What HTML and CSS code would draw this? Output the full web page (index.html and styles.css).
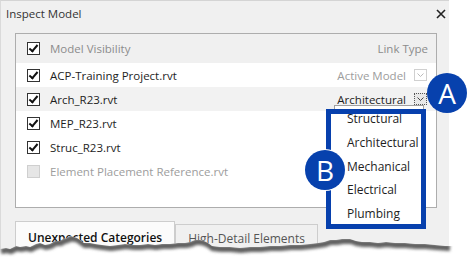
FILE: index.html
```html
<!DOCTYPE html>
<html lang="en">
<head>
<meta charset="UTF-8">
<meta name="viewport" content="width=device-width, initial-scale=1.0">
<title>Inspect Model</title>
<link rel="stylesheet" href="styles.css">
</head>
<body>
<div class="dialog">
    <div class="titlebar">
        <span class="title">Inspect Model</span>
        <svg class="close" width="10" height="10" viewBox="0 0 10 10"><path d="M1 1 L9 9 M9 1 L1 9" stroke="#222" stroke-width="1.6"/></svg>
    </div>
    <div class="panel">
        <div class="row head">
            <span class="cb on"></span>
            <span class="name">Model Visibility</span>
            <span class="type">Link Type</span>
        </div>
        <div class="row">
            <span class="cb on"></span>
            <span class="name">ACP-Training Project.rvt</span>
            <span class="type muted">Active Model</span>
            <span class="drop off"><svg width="7" height="4" viewBox="0 0 7 4"><path d="M0.5 0.5 L3.5 3.5 L6.5 0.5" fill="none" stroke="#bbb"/></svg></span>
        </div>
        <div class="row alt">
            <span class="cb on"></span>
            <span class="name">Arch_R23.rvt</span>
            <span class="type">Architectural</span>
            <span class="drop focus"><svg width="7" height="4" viewBox="0 0 7 4"><path d="M0.5 0.5 L3.5 3.5 L6.5 0.5" fill="none" stroke="#444"/></svg></span>
        </div>
        <div class="row">
            <span class="cb on"></span>
            <span class="name">MEP_R23.rvt</span>
        </div>
        <div class="row">
            <span class="cb on"></span>
            <span class="name">Struc_R23.rvt</span>
        </div>
        <div class="row">
            <span class="cb disabled"></span>
            <span class="name muted">Element Placement Reference.rvt</span>
        </div>
    </div>
    <div class="tabs">
        <div class="tab active">Unexpected Categories</div>
        <div class="tab">High-Detail Elements</div>
    </div>
</div>

<div class="menu"></div>
<div class="callout">
    <div class="items">
        <div class="item">Structural</div>
        <div class="item">Architectural</div>
        <div class="item">Mechanical</div>
        <div class="item">Electrical</div>
        <div class="item">Plumbing</div>
    </div>
</div>
<div class="badge badge-a">A</div>
<div class="badge badge-b">B</div>

<svg class="tear" width="468" height="34" viewBox="0 236 468 34">
    <defs>
        <clipPath id="below">
            <path id="edge" d="M0 249 L6 248 L10 249 L16 246 L20 247 L26 246 L30 247 L36 244 L40 243 L45 245 L50 244 L55 241 L60 241 L63 239 L67 238 L70 236 L74 237 L77 238 L80 240 L84 243 L90 243 L95 244 L102 245 L110 246 L118 245 L125 244 L133 245 L140 245 L148 244 L155 245 L162 244 L170 244 L178 243 L185 243 L190 242 L195 240 L200 240 L204 241 L208 243 L212 246 L220 247 L230 247 L240 248 L250 247 L260 247 L270 246 L280 246 L290 245 L300 245 L310 244 L318 243 L324 242 L330 240 L336 240 L342 239 L350 239 L356 241 L362 242 L370 242 L378 243 L386 242 L395 243 L405 243 L415 244 L425 244 L435 245 L445 246 L468 246 L468 270 L0 270 Z"/>
        </clipPath>
        <filter id="blur" x="-5%" y="-50%" width="110%" height="200%">
            <feGaussianBlur stdDeviation="1.8"/>
        </filter>
    </defs>
    <use href="#edge" fill="#fff"/>
    <g clip-path="url(#below)">
        <path d="M0 249 L6 248 L10 249 L16 246 L20 247 L26 246 L30 247 L36 244 L40 243 L45 245 L50 244 L55 241 L60 241 L63 239 L67 238 L70 236 L74 237 L77 238 L80 240 L84 243 L90 243 L95 244 L102 245 L110 246 L118 245 L125 244 L133 245 L140 245 L148 244 L155 245 L162 244 L170 244 L178 243 L185 243 L190 242 L195 240 L200 240 L204 241 L208 243 L212 246 L220 247 L230 247 L240 248 L250 247 L260 247 L270 246 L280 246 L290 245 L300 245 L310 244 L318 243 L324 242 L330 240 L336 240 L342 239 L350 239 L356 241 L362 242 L370 242 L378 243 L386 242 L395 243 L405 243 L415 244 L425 244 L435 245 L449 246" fill="none" stroke="#5e5e5e" stroke-width="6" transform="translate(1 2)" filter="url(#blur)"/>
    </g>
</svg>
</body>
</html>
```

FILE: styles.css
```css
body {
    margin: 0;
    background: #fff;
    font-family: 'Open Sans', 'Noto Sans', sans-serif;
    font-size: 11.5px;
    color: #1e1e1e;
    width: 468px;
    height: 264px;
    overflow: hidden;
    position: relative;
}
.dialog {
    width: 449px;
    height: 264px;
    box-sizing: border-box;
    background: #f0f0f0;
    border-top: 1px solid #d4d4d4;
    border-left: 1px solid #dadada;
}
.titlebar {
    height: 25px;
    display: flex;
    align-items: center;
    justify-content: space-between;
    padding: 0 3px 0 5px;
}
.title {
    font-size: 11.5px;
    color: #333;
}
.panel {
    margin: 7px 12px 0 14px;
    height: 175px;
    box-sizing: border-box;
    border: 1px solid #adadad;
    background: #fff;
}
.row {
    height: 24px;
    display: flex;
    align-items: center;
    padding: 0 9px 0 11px;
}
.row.head {
    height: 29px;
    background: #f0f0f0;
    padding-right: 8px;
}
.row.alt {
    background: #f2f2f2;
}
.cb {
    width: 11px;
    height: 11px;
    border: 1px solid #333;
    background: #fff;
    flex: none;
    margin-right: 10px;
    position: relative;
}
.cb.on::after {
    content: "";
    position: absolute;
    left: 3px;
    top: 0px;
    width: 3px;
    height: 7px;
    border: solid #111;
    border-width: 0 2px 2px 0;
    transform: rotate(40deg);
}
.cb.disabled {
    background: #e6e6e6;
    border-color: #cfcfcf;
}
.name {
    flex: 1;
}
.head .name,
.head .type {
    color: #8c8c8c;
}
.muted {
    color: #9d9d9d;
}
.type {
    text-align: right;
}
.drop {
    width: 11px;
    height: 10px;
    margin-left: 8px;
    display: flex;
    align-items: center;
    justify-content: center;
    border: 1px solid #d0d0d0;
    background: #fff;
}
.drop.focus {
    border: 1px dotted #555;
    background: #e8e8e8;
}
.tabs {
    margin-top: 13px;
    padding-left: 14px;
    display: flex;
    align-items: flex-start;
}
.tab {
    height: 30px;
    padding: 0 12px;
    line-height: 28px;
    border: 1px solid #cdcdcd;
    border-bottom: none;
    color: #555;
    margin-top: 3px;
    font-size: 12px;
}
.tab.active {
    margin-top: 0;
    padding-top: 2px;
    background: #fbfbfb;
    color: #111;
    font-weight: 600;
}
.menu {
    position: absolute;
    left: 334px;
    top: 105px;
    width: 88px;
    height: 122px;
    border: 1px solid #a0a0a0;
    background: #fff;
}
.callout {
    position: absolute;
    left: 326px;
    top: 109px;
    width: 74px;
    height: 110px;
    border: 5px solid #0740ad;
    background: #fff;
    padding-left: 16px;
    overflow: hidden;
}
.items {
    margin-top: -7px;
}
.item {
    height: 23.8px;
    line-height: 24px;
    font-size: 12px;
}
.badge {
    position: absolute;
    width: 40px;
    height: 40px;
    border-radius: 50%;
    background: #0741ad;
    color: #fff;
    font-family: 'Open Sans', sans-serif;
    font-size: 28px;
    line-height: 40px;
    text-align: center;
}
.badge-a {
    left: 427px;
    top: 73px;
}
.badge-b {
    left: 305px;
    top: 150px;
    box-shadow: 0 0 0 1px #fff;
}
.tear {
    position: absolute;
    left: 0;
    top: 236px;
}
```
